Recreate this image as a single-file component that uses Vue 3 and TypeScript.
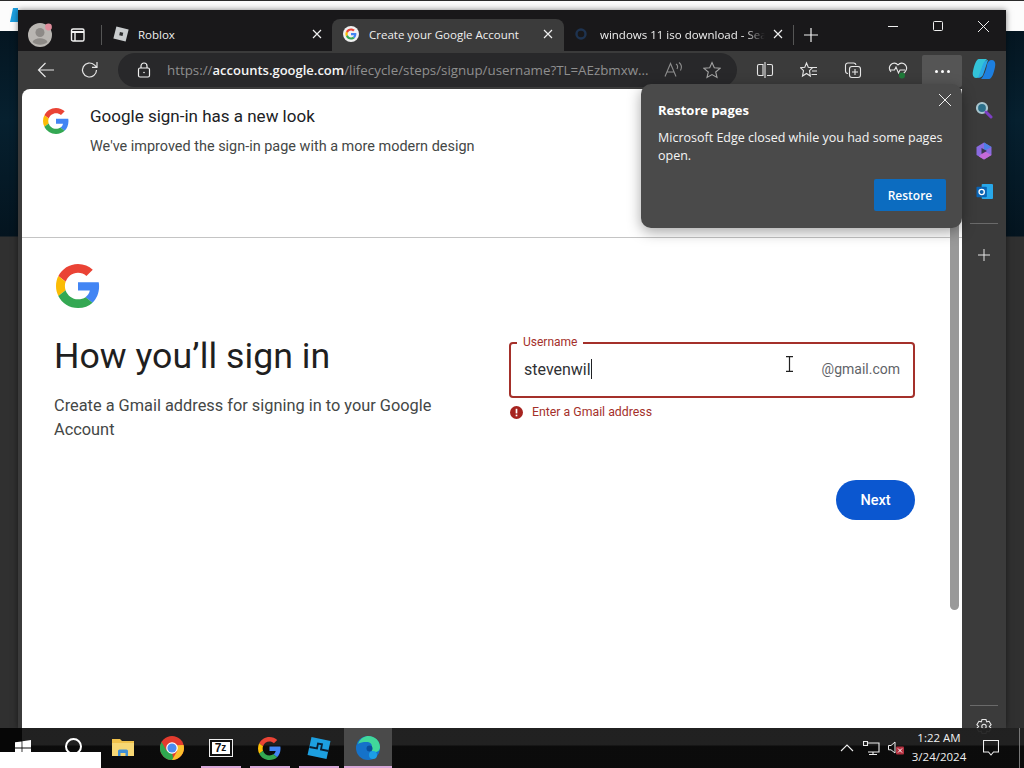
<script setup lang="ts">
const tabs = [
  { id: 'roblox', title: 'Roblox', active: false },
  { id: 'google', title: 'Create your Google Account', active: true },
  { id: 'search', title: 'windows 11 iso download - Sea', active: false },
]
const pinned = ['folder', 'chrome', 'sevenzip', 'google', 'roblox', 'edge']
</script>

<template>
  <div class="desktop">
    <div class="top-strip"></div>
    <svg class="desktop-icon" width="8" height="14" viewBox="0 0 8 14"><path d="M3 0h5v14H0z" fill="#1d9fe0" /></svg>
    <div class="window">
      <header class="tabbar">
        <div class="profile">
          <svg width="24" height="24" viewBox="0 0 24 24">
            <circle cx="12" cy="12" r="12" fill="#b9b6b2" />
            <circle cx="12" cy="9.500" r="4.500" fill="#8d8a87" />
            <path d="M4.500 19c2-5 13-5 15 0-4 3.500-11 3.500-15 0z" fill="#8d8a87" />
            <circle cx="20.500" cy="4" r="3.400" fill="#e08d9c" />
          </svg>
        </div>
        <svg class="tabs-icon" width="16" height="16" viewBox="0 0 16 16" fill="none" stroke="#f2f2f2" stroke-width="1.4">
          <rect x="1.500" y="2" width="12.500" height="12" rx="1.600" />
          <path d="M1.500 5h12.500" stroke-width="2" />
          <path d="M5 5v9" />
        </svg>
        <span class="divider"></span>
        <div
          v-for="tab in tabs"
          :key="tab.id"
          class="tab"
          :class="[`tab-${tab.id}`, { active: tab.active }]"
        >
          <svg v-if="tab.id === 'roblox'" class="favicon" width="16" height="16" viewBox="0 0 16 16">
            <path d="M3.400 0.600 15.600 3.400 12.600 15.400 0.400 12.400z" fill="#c9ccce" />
            <rect x="6.500" y="6.200" width="3.400" height="3.400" fill="#2a2b2c" transform="rotate(13 8 8)" />
          </svg>
          <svg v-else-if="tab.id === 'google'" class="favicon" width="16" height="16" viewBox="0 0 48 48">
            <circle cx="24" cy="24" r="24" fill="#f1f1f1" />
            <g transform="translate(7.200 7.200) scale(.7)">
              <path fill="#ea4335" d="M24 9.500c3.500 0 6.700 1.200 9.200 3.600l6.900-6.900C35.900 2.400 30.500 0 24 0 14.600 0 6.500 5.400 2.600 13.200l8 6.200C12.400 13.700 17.700 9.500 24 9.500z" />
              <path fill="#4285f4" d="M47 24.500c0-1.600-.1-3.100-.4-4.500H24v9h12.900c-.6 3-2.200 5.500-4.800 7.200l7.700 6C44.300 37.900 47 31.800 47 24.500z" />
              <path fill="#fbbc05" d="M10.500 28.600c-.5-1.400-.8-3-.8-4.600s.3-3.200.8-4.600l-8-6.200C.9 16.500 0 20.100 0 24s.9 7.500 2.600 10.800z" />
              <path fill="#34a853" d="M24 48c6.500 0 11.900-2.100 15.900-5.800l-7.700-6c-2.200 1.500-4.900 2.300-8.200 2.300-6.300 0-11.600-4.200-13.500-9.900l-8 6.200C6.500 42.600 14.600 48 24 48z" />
            </g>
          </svg>
          <svg v-else class="favicon" width="16" height="16" viewBox="0 0 16 16" fill="none" stroke="#1e3350" stroke-width="2.400">
            <circle cx="8" cy="8" r="4.500" />
          </svg>
          <span class="tab-title">{{ tab.title }}</span>
          <svg class="tab-close" width="10" height="10" viewBox="0 0 10 10" stroke="#efefef" stroke-width="1.200">
            <path d="M1 1l8 8M9 1l-8 8" />
          </svg>
        </div>
        <span class="divider new-divider"></span>
        <svg class="new-tab" width="14" height="14" viewBox="0 0 14 14" stroke="#f0f0f0" stroke-width="1.200">
          <path d="M7 0v14M0 7h14" />
        </svg>
        <div class="win-controls">
          <svg width="10" height="10" viewBox="0 0 10 10" stroke="#f0f0f0" stroke-width="1"><path d="M0 5.500h10" /></svg>
          <svg width="10" height="10" viewBox="0 0 10 10" fill="none" stroke="#f0f0f0" stroke-width="1"><rect x=".5" y=".5" width="9" height="9" rx="1" /></svg>
          <svg width="11" height="11" viewBox="0 0 11 11" stroke="#f0f0f0" stroke-width="1"><path d="M0 0l11 11M11 0 0 11" /></svg>
        </div>
      </header>

      <div class="toolbar">
        <svg class="nav-icon" width="18" height="18" viewBox="0 0 18 18" fill="none" stroke="#e6e6e6" stroke-width="1.200"><path d="M17 9H1.500M8.500 2 1.500 9l7 7" /></svg>
        <svg class="nav-icon reload" width="18" height="18" viewBox="0 0 18 18" fill="none" stroke="#e6e6e6" stroke-width="1.200"><path d="M15.500 9a7 7 0 1 1-2.200-5.100L16 6.400M16 1v5.400h-5" /></svg>
        <div class="address">
          <svg width="14" height="16" viewBox="0 0 14 16" fill="none" stroke="#efefef" stroke-width="1.200">
            <rect x="1.500" y="6" width="11" height="9" rx="1.500" />
            <path d="M4 6V4a3 3 0 0 1 6 0v2" />
            <circle cx="7" cy="10.500" r=".8" fill="#efefef" stroke="none" />
          </svg>
          <span class="url"><span class="dim">https://</span><b>accounts.google.com</b><span class="dim">/lifecycle/steps/signup/username?TL=AEzbmxw...</span></span>
          <svg class="addr-read" width="20" height="18" viewBox="0 0 20 18" fill="none" stroke="#8d8d8d" stroke-width="1.100">
            <path d="M1 15.500 6.500 2.500 12 15.500M3 11h7" />
            <path d="M12 3c1.500 1 2 3 1 5M15 1.500c2.500 2 3 5 1.500 8" />
          </svg>
          <svg class="addr-star" width="18" height="18" viewBox="0 0 18 18" fill="none" stroke="#a3a3a3" stroke-width="1.100">
            <path d="M9 1.500 11.300 6.700 17 7.300 12.700 11 14 16.500 9 13.600 4 16.500 5.300 11 1 7.300 6.700 6.700z" />
          </svg>
        </div>
        <div class="tools">
          <svg width="18" height="18" viewBox="0 0 18 18" fill="none" stroke="#e6e6e6" stroke-width="1.100">
            <path d="M7 3.500H3a1.500 1.500 0 0 0-1.500 1.500v8A1.500 1.500 0 0 0 3 14.500h4zM11 3.500h4A1.500 1.500 0 0 1 16.500 5v8a1.500 1.500 0 0 1-1.500 1.500h-4M9 1v16" />
          </svg>
          <svg width="18" height="18" viewBox="0 0 18 18" fill="none" stroke="#e6e6e6" stroke-width="1.100">
            <path d="M6.500 2 8.300 6.300 12.500 6.700 9.500 9.700 10.300 15 6.500 12.500 2.500 15 3.500 9.700.5 6.700 4.800 6.300zM12 6.500h5M12 10h5M11.500 13.500H17" />
          </svg>
          <svg width="18" height="18" viewBox="0 0 18 18" fill="none" stroke="#e6e6e6" stroke-width="1.100">
            <path d="M4 12.500A2.500 2.500 0 0 1 1.500 10V4.500A2.500 2.500 0 0 1 4 2h5.500A2.500 2.500 0 0 1 12 4" />
            <rect x="5.500" y="5.500" width="11" height="11" rx="2.500" />
            <path d="M11 8v6M8 11h6" />
          </svg>
          <svg width="20" height="18" viewBox="0 0 20 18" fill="none" stroke="#e6e6e6" stroke-width="1.100">
            <path d="M3 11C1 8.500 1 5.500 3 3.500s5-1.800 7 .5c2-2.300 5-2.500 7-.5s2 5 0 7.500l-3 3" />
            <path d="M1.500 9h5l1.500-3 2.500 6 1.500-3h5" />
            <circle cx="14" cy="14.500" r="3" fill="#1f7a3a" stroke="none" />
          </svg>
          <div class="more"><i></i><i></i><i></i></div>
        </div>
      </div>

      <div class="content">
        <main class="page">
          <section class="banner">
            <svg class="g-small" width="26" height="26" viewBox="0 0 48 48">
              <path fill="#ea4335" d="M24 9.500c3.500 0 6.700 1.200 9.200 3.600l6.900-6.900C35.900 2.400 30.500 0 24 0 14.600 0 6.500 5.400 2.600 13.200l8 6.200C12.400 13.700 17.700 9.500 24 9.500z" />
              <path fill="#4285f4" d="M47 24.500c0-1.600-.1-3.100-.4-4.500H24v9h12.900c-.6 3-2.200 5.500-4.800 7.200l7.700 6C44.300 37.900 47 31.800 47 24.500z" />
              <path fill="#fbbc05" d="M10.500 28.600c-.5-1.400-.8-3-.8-4.600s.3-3.200.8-4.600l-8-6.200C.9 16.500 0 20.100 0 24s.9 7.500 2.600 10.800z" />
              <path fill="#34a853" d="M24 48c6.500 0 11.900-2.100 15.900-5.800l-7.700-6c-2.200 1.500-4.900 2.300-8.200 2.300-6.300 0-11.600-4.200-13.500-9.900l-8 6.200C6.500 42.600 14.600 48 24 48z" />
            </svg>
            <div>
              <h2>Google sign-in has a new look</h2>
              <p>We've improved the sign-in page with a more modern design</p>
            </div>
          </section>

          <section class="signup">
            <svg class="g-large" width="44" height="44" viewBox="0 0 48 48">
              <path fill="#ea4335" d="M24 9.500c3.500 0 6.700 1.200 9.200 3.600l6.900-6.900C35.900 2.400 30.500 0 24 0 14.600 0 6.500 5.400 2.600 13.200l8 6.200C12.400 13.700 17.700 9.500 24 9.500z" />
              <path fill="#4285f4" d="M47 24.500c0-1.600-.1-3.100-.4-4.500H24v9h12.900c-.6 3-2.200 5.500-4.800 7.200l7.700 6C44.300 37.900 47 31.800 47 24.500z" />
              <path fill="#fbbc05" d="M10.500 28.600c-.5-1.400-.8-3-.8-4.600s.3-3.200.8-4.600l-8-6.200C.9 16.500 0 20.100 0 24s.9 7.500 2.600 10.800z" />
              <path fill="#34a853" d="M24 48c6.500 0 11.900-2.100 15.900-5.800l-7.700-6c-2.200 1.500-4.900 2.300-8.200 2.300-6.300 0-11.600-4.200-13.500-9.900l-8 6.200C6.500 42.600 14.600 48 24 48z" />
            </svg>
            <div class="columns">
              <div class="intro">
                <h1>How you’ll sign in</h1>
                <p>Create a Gmail address for signing in to your Google Account</p>
              </div>
              <div class="form">
                <div class="field">
                  <span class="field-label">Username</span>
                  <span class="field-value">stevenwil<i class="caret"></i></span>
                  <span class="field-suffix">@gmail.com</span>
                  <svg class="ibeam" width="9" height="16" viewBox="0 0 9 16" fill="none" stroke="#222" stroke-width="1.200">
                    <path d="M1 .6h7M1 15.400h7M4.500 .6v14.800" />
                  </svg>
                </div>
                <div class="error">
                  <svg width="13" height="13" viewBox="0 0 14 14">
                    <circle cx="7" cy="7" r="7" fill="#a6231f" />
                    <rect x="6.100" y="3" width="1.800" height="5" fill="#fff" />
                    <rect x="6.100" y="9.300" width="1.800" height="1.800" fill="#fff" />
                  </svg>
                  <span>Enter a Gmail address</span>
                </div>
                <button class="next" type="button">Next</button>
              </div>
            </div>
          </section>
          <div class="scrollbar"><span class="thumb"></span></div>
        </main>

        <aside class="sidebar">
          <svg class="copilot" width="26" height="26" viewBox="0 0 26 26">
            <path d="M8 3h8c-3 3-5 9-6 14-.5 3-2 5-5 5-2.500 0-4-3-3-7 1-5 3-12 6-12z" fill="#33c3d8" />
            <path d="M18 23h-8c3-3 5-9 6-14 .5-3 2-5 5-5 2.500 0 4 3 3 7-1 5-3 12-6 12z" fill="#1d7fe0" />
            <path d="M12 8c1-2 3-4 5-4l-5 15c-1 2-3 3-5 3z" fill="#2aa7e6" />
          </svg>
          <svg class="side-icon" width="18" height="18" viewBox="0 0 18 18" fill="none">
            <circle cx="7" cy="7" r="5" fill="#2b6f8a" stroke="#a9c6cf" stroke-width="2.200" />
            <path d="M11 11l5 5" stroke="#7d3fc4" stroke-width="3" stroke-linecap="round" />
          </svg>
          <svg class="side-icon" width="18" height="18" viewBox="0 0 18 18">
            <path d="M9 .5 16.500 5v8L9 17.500 1.500 13V5z" fill="#8a6be0" />
            <path d="M9 .5 16.500 5 9 9z" fill="#4c7fe6" />
            <path d="M9 9l7.500 4L9 17.500 4 14.500z" fill="#c46ad8" />
            <path d="M6.500 6 12 9 6.500 12z" fill="#3a3650" />
          </svg>
          <svg class="side-icon outlook" width="17" height="17" viewBox="0 0 18 18">
            <rect x="6" y="1" width="12" height="16" rx="1" fill="#28a8ea" />
            <rect x="0.500" y="4" width="11" height="11" rx="1" fill="#0a64b4" />
            <circle cx="6" cy="9.500" r="2.800" fill="none" stroke="#fff" stroke-width="1.400" />
          </svg>
          <span class="side-rule"></span>
          <svg class="side-plus" width="12" height="12" viewBox="0 0 12 12" stroke="#e6e6e6" stroke-width="1"><path d="M6 0v12M0 6h12" /></svg>
          <span class="side-spacer"></span>
          <span class="side-rule"></span>
          <svg class="side-gear" width="18" height="18" viewBox="0 0 18 18" fill="none" stroke="#e6e6e6" stroke-width="1.100">
            <path d="M7 1.500h4l.7 2.300 2.400-.5 2 3.400-1.700 1.800 1.700 1.800-2 3.400-2.400-.5-.7 2.300H7l-.7-2.300-2.400.5-2-3.400L3.600 8.500 1.900 6.700l2-3.400 2.400.5z" />
            <circle cx="9" cy="8.500" r="2.200" />
          </svg>
        </aside>
      </div>

      <div class="restore">
        <svg class="restore-close" width="12" height="12" viewBox="0 0 12 12" stroke="#f0f0f0" stroke-width="1"><path d="M0 0l12 12M12 0 0 12" /></svg>
        <h3>Restore pages</h3>
        <p>Microsoft Edge closed while you had some pages open.</p>
        <div class="restore-actions"><button type="button">Restore</button></div>
      </div>
    </div>

    <footer class="taskbar">
      <div class="start">
        <svg width="16" height="16" viewBox="0 0 16 16" fill="#fff">
          <path d="M0 2.300 6.600 1.400v6.200H0zM7.400 1.300 16 0v7.600H7.400zM0 8.400h6.600v6.200L0 13.700zM7.400 8.400H16V16l-8.600-1.300z" />
        </svg>
      </div>
      <div class="search-ring"><span></span></div>
      <div
        v-for="app in pinned"
        :key="app"
        class="task-app"
        :class="`app-${app}`"
      >
        <svg v-if="app === 'folder'" width="22" height="20" viewBox="0 0 22 20">
          <path d="M0 1h8l2 2h12v15H0z" fill="#f0c14b" />
          <path d="M0 5h22v13H0z" fill="#f7d774" />
          <path d="M6 18v-5a1.500 1.500 0 0 1 1.500-1.500h7A1.500 1.500 0 0 1 16 13v5h-2.500v-3h-5v3z" fill="#3f8fd6" />
        </svg>
        <svg v-else-if="app === 'chrome'" width="24" height="24" viewBox="0 0 24 24">
          <circle cx="12" cy="12" r="12" fill="#e33b2e" />
          <path d="M12 24A12 12 0 0 1 1.600 6l5.200 9 5 .3 1.700 8.600z" fill="#2fa84f" />
          <path d="M23.600 9A12 12 0 0 1 12 24l5.200-9-.6-5.700z" fill="#fbc02d" />
          <circle cx="12" cy="12" r="5.800" fill="#fff" />
          <circle cx="12" cy="12" r="4.600" fill="#4a8cf0" />
        </svg>
        <div v-else-if="app === 'sevenzip'" class="zip"><b>7</b><b class="z">z</b></div>
        <svg v-else-if="app === 'google'" width="23" height="23" viewBox="0 0 48 48">
          <path fill="#ea4335" d="M24 9.500c3.500 0 6.700 1.200 9.200 3.600l6.900-6.900C35.900 2.400 30.500 0 24 0 14.600 0 6.500 5.400 2.600 13.200l8 6.200C12.400 13.700 17.700 9.500 24 9.500z" />
          <path fill="#4285f4" d="M47 24.500c0-1.600-.1-3.100-.4-4.500H24v9h12.900c-.6 3-2.200 5.500-4.800 7.200l7.700 6C44.300 37.900 47 31.800 47 24.500z" />
          <path fill="#fbbc05" d="M10.500 28.600c-.5-1.400-.8-3-.8-4.600s.3-3.200.8-4.600l-8-6.200C.9 16.500 0 20.100 0 24s.9 7.500 2.600 10.800z" />
          <path fill="#34a853" d="M24 48c6.500 0 11.900-2.100 15.900-5.800l-7.700-6c-2.200 1.500-4.900 2.300-8.200 2.300-6.300 0-11.600-4.200-13.500-9.900l-8 6.200C6.500 42.600 14.600 48 24 48z" />
        </svg>
        <svg v-else-if="app === 'roblox'" width="24" height="24" viewBox="0 0 24 24">
          <path d="M4.500 1 23.500 5 19.500 23 .5 19z" fill="#1d9fe0" />
          <path d="M2.500 11 10 12.500 11 7.500 15 8.300 14 13.500 21.500 15" fill="none" stroke="#0b1f33" stroke-width="1.800" />
        </svg>
        <svg v-else width="24" height="24" viewBox="0 0 24 24">
          <circle cx="12" cy="12" r="12" fill="#1572c9" />
          <path d="M2 8C4 2 9 0 12.500 0 19 0 24 5 24 11c0 3-2 5-5 5-2.500 0-4-1-4-2.500 0-1 1-1.200 1-2.800C16 8 14 6 10.500 6 7 6 4 6.500 2 8z" fill="#41d89a" />
          <circle cx="13.500" cy="12.500" r="3" fill="#0a4f9c" />
          <circle cx="17" cy="19" r="4" fill="#1b9ee6" />
        </svg>
      </div>
      <div class="tray">
        <svg width="14" height="8" viewBox="0 0 14 8" fill="none" stroke="#eee" stroke-width="1.100"><path d="M1 7l6-6 6 6" /></svg>
        <svg width="17" height="14" viewBox="0 0 17 14" fill="none" stroke="#eee" stroke-width="1.100">
          <path d="M4 2h12v9H5M10 11v2.500M6 13.500h8M0.500 .5h4v4h-4z" />
        </svg>
        <svg class="speaker" width="18" height="14" viewBox="0 0 18 14">
          <path d="M.5 4.500h2.500L7 1v11L3 8.800H.5z" fill="none" stroke="#eee" stroke-width="1" />
          <rect x="8" y="5.500" width="8" height="8" rx="1" fill="#b3303f" />
          <path d="M10 7.500l4 4M14 7.500l-4 4" stroke="#fff" stroke-width="1" />
        </svg>
        <div class="clock"><span>1:22 AM</span><span>3/24/2024</span></div>
        <svg class="notify" width="16" height="16" viewBox="0 0 16 16" fill="none" stroke="#eee" stroke-width="1.100">
          <path d="M.5.500h15v11.500h-5L8 15 5.500 12h-5z" />
        </svg>
        <span class="show-desktop"></span>
      </div>
    </footer>
    <div class="corner-block"></div>
  </div>
</template>

<style scoped>
.desktop {
  position: relative;
  width: 1024px;
  height: 768px;
  overflow: hidden;
  background: linear-gradient(180deg, #04121c 0, #06202f 120px, #04141f 236px, #303030 237px, #303030 100%);
  font-family: "Roboto", "Liberation Sans", sans-serif;
}

.top-strip {
  height: 31px;
  background: #fcfcfc;
  border-top: 1px solid #2b2b2b;
  box-sizing: border-box;
}

.desktop-icon {
  position: absolute;
  left: 10px;
  top: 8px;
}

.window {
  position: absolute;
  left: 18px;
  top: 10px;
  width: 988px;
  height: 718px;
  display: flex;
  flex-direction: column;
  background: #3b3b3b;
  box-shadow: 0 0 6px rgba(0, 0, 0, 0.5);
}

.tabbar {
  height: 41px;
  flex: none;
  display: flex;
  align-items: flex-end;
  background: #19181a;
  position: relative;
}

.profile {
  width: 24px;
  height: 24px;
  margin: 0 0 4px 10px;
  flex: none;
}

.tabs-icon {
  margin: 0 0 8px 18px;
  flex: none;
}

.divider {
  width: 1px;
  height: 20px;
  background: #555;
  margin: 0 0 6px 15px;
  flex: none;
}

.tab {
  height: 32px;
  display: flex;
  align-items: center;
  color: #efefef;
  font-family: "Open Sans", "Liberation Sans", sans-serif;
  font-size: 11.500px;
  flex: none;
  box-sizing: border-box;
  padding-bottom: 2px;
}

.tab-roblox {
  width: 226px;
  padding-left: 7px;
  margin-left: 4px;
}

.tab-google {
  width: 232px;
  padding-left: 11px;
}

.tab-search {
  width: 226px;
  padding-left: 9px;
}

.tab.active {
  background: #3b3b3b;
  border-radius: 8px 8px 0 0;
}

.tab-title {
  flex: 1;
  min-width: 0;
  margin-left: 10px;
  white-space: nowrap;
}

.tab-roblox .tab-title {
  margin-left: 9px;
}

.tab-search .tab-title {
  margin-left: 11px;
  -webkit-mask-image: linear-gradient(90deg, #000 88%, transparent 100%);
  mask-image: linear-gradient(90deg, #000 88%, transparent 100%);
}

.tab-close {
  margin: 0 11px 0 8px;
  flex: none;
}

.tab-roblox .tab-close {
  margin-right: 10px;
}

.tab-search .tab-close {
  margin-right: 7px;
}

.favicon {
  flex: none;
}

.new-divider {
  margin-left: 3px;
}

.new-tab {
  margin: 0 0 9px 10px;
  flex: none;
}

.win-controls {
  position: absolute;
  right: 0;
  top: 0;
  width: 140px;
  height: 32px;
  display: flex;
  justify-content: space-between;
  align-items: center;
  padding: 0 17px 0 22px;
  box-sizing: border-box;
}

.toolbar {
  height: 38px;
  flex: none;
  display: flex;
  align-items: center;
  background: #3b3b3b;
}

.nav-icon {
  margin-left: 19px;
  flex: none;
}

.reload {
  margin-left: 26px;
}

.address {
  width: 619px;
  height: 34px;
  margin-left: 19px;
  padding: 0 12px 0 19px;
  box-sizing: border-box;
  border-radius: 17px;
  background: #28282a;
  display: flex;
  align-items: center;
  flex: none;
}

.url {
  margin-left: 16px;
  flex: 1;
  min-width: 0;
  white-space: nowrap;
  font-family: "Open Sans", "Liberation Sans", sans-serif;
  font-size: 13.350px;
  color: #f4f4f4;
}

.url b {
  font-size: 13px;
  font-weight: 600;
}

.url .dim {
  color: #8f8f8f;
}

.addr-read {
  margin-left: 8px;
  flex: none;
}

.addr-star {
  margin-left: 19px;
  margin-right: 4px;
  flex: none;
}

.tools {
  display: flex;
  align-items: center;
  gap: 26px;
  margin-left: 19px;
  height: 38px;
}

.more {
  width: 40px;
  height: 32px;
  margin-left: -12px;
  margin-top: 2px;
  background: #555;
  border-radius: 2px;
  display: flex;
  align-items: center;
  justify-content: center;
  gap: 3px;
}

.more i {
  width: 3px;
  height: 3px;
  border-radius: 50%;
  background: #fff;
}

.content {
  flex: 1;
  min-height: 0;
  display: flex;
}

.page {
  position: relative;
  width: 940px;
  margin-left: 4px;
  background: #fff;
  border-radius: 8px 0 0 0;
  color: #202124;
  overflow: hidden;
}

.banner {
  height: 149px;
  box-sizing: border-box;
  border-bottom: 1px solid #c4c4c4;
  padding: 19px 20px 19px 21px;
  display: flex;
  align-items: flex-start;
  gap: 21px;
}

.g-small {
  flex: none;
}

.banner h2 {
  margin: 0;
  font-size: 17px;
  font-weight: 400;
  line-height: 16px;
  color: #202124;
}

.banner p {
  margin: 15px 0 0;
  font-size: 14.450px;
  line-height: 16px;
  color: #444746;
}

.signup {
  padding: 26px 47px 0 32px;
}

.g-large {
  display: block;
  margin-left: 2px;
}

.columns {
  display: grid;
  grid-template-columns: 1fr 406px;
  column-gap: 55px;
  margin-top: 26px;
}

.intro h1 {
  margin: 0;
  font-size: 35.700px;
  font-weight: 400;
  line-height: 44px;
  color: #1f1f1f;
}

.intro p {
  margin: 16px 0 0;
  font-size: 16.350px;
  line-height: 24px;
  color: #444746;
}

.form {
  padding-top: 8px;
  display: flex;
  flex-direction: column;
}

.field {
  position: relative;
  height: 56px;
  box-sizing: border-box;
  border: 2px solid #a4302a;
  border-radius: 4px;
  display: flex;
  align-items: center;
  padding: 0 13px 2px;
}

.field-label {
  position: absolute;
  left: 6px;
  top: -9px;
  padding: 0 6px;
  background: #fff;
  font-size: 12px;
  line-height: 14px;
  color: #a4302a;
}

.field-value {
  flex: 1;
  font-size: 16px;
  color: #303134;
  display: flex;
  align-items: center;
}

.caret {
  width: 1px;
  height: 20px;
  background: #202124;
}

.field-suffix {
  font-size: 14px;
  color: #5f6368;
}

.ibeam {
  position: absolute;
  left: 274px;
  top: 12px;
}

.error {
  display: flex;
  align-items: center;
  gap: 9px;
  margin-top: 6px;
  padding-left: 1px;
  font-size: 12.300px;
  line-height: 16px;
  color: #a4302a;
}

.next {
  align-self: flex-end;
  margin-top: 60px;
  width: 79px;
  height: 40px;
  border: 0;
  border-radius: 20px;
  background: #0b57d0;
  color: #fff;
  font-family: inherit;
  font-size: 14.500px;
  font-weight: 500;
}

.scrollbar {
  position: absolute;
  right: 0;
  top: 0;
  bottom: 0;
  width: 14px;
}

.thumb {
  position: absolute;
  left: 2px;
  top: 60px;
  width: 9px;
  height: 461px;
  border-radius: 5px;
  background: #999;
}

.sidebar {
  flex: 1;
  display: flex;
  flex-direction: column;
  align-items: center;
  background: #3b3b3b;
  position: relative;
  min-height: 0;
}

.copilot {
  position: absolute;
  top: -33px;
  left: 9px;
}

.side-icon {
  margin-top: 12px;
  margin-bottom: 11px;
  flex: none;
}

.outlook {
  margin-bottom: 12px;
}

.side-rule {
  width: 28px;
  height: 1px;
  background: #6a6a6a;
  margin-top: 0;
  flex: none;
}

.side-plus {
  margin-top: 25px;
  flex: none;
}

.side-spacer {
  flex: 1;
}

.side-gear {
  margin-top: 12px;
  margin-bottom: -8px;
  flex: none;
}

.side-icon + .side-rule {
  margin-top: 11px;
}

.restore {
  position: absolute;
  left: 623px;
  top: 74px;
  width: 321px;
  height: 144px;
  box-sizing: border-box;
  padding: 17px 16px 16px 17px;
  border-radius: 10px;
  background: #4a4a4a;
  box-shadow: 0 4px 14px rgba(0, 0, 0, 0.35);
  color: #f5f5f5;
  font-family: "Open Sans", "Liberation Sans", sans-serif;
}

.restore-close {
  position: absolute;
  right: 11px;
  top: 10px;
}

.restore h3 {
  margin: 0;
  font-size: 13px;
  line-height: 18px;
  font-weight: 700;
  color: #fff;
}

.restore p {
  margin: 10px 0 0;
  font-size: 12.500px;
  line-height: 18px;
  width: 295px;
}

.restore-actions {
  display: flex;
  justify-content: flex-end;
  margin-top: 14px;
}

.restore button {
  width: 72px;
  height: 32px;
  border: 0;
  border-radius: 2px;
  background: #0c6cc0;
  color: #fff;
  font-family: inherit;
  font-size: 12px;
  font-weight: 600;
}

.taskbar {
  position: absolute;
  left: 0;
  right: 0;
  bottom: 0;
  height: 40px;
  display: flex;
  align-items: center;
  background:
    linear-gradient(90deg, #060606 0, #060606 22px, transparent 22px),
    linear-gradient(180deg, rgba(32, 32, 32, 0.94) 0, rgba(32, 32, 32, 0.94) 17px, rgba(10, 10, 10, 0.97) 18px, rgba(10, 10, 10, 0.97) 100%);
  color: #f0f0f0;
}

.start {
  width: 49px;
  padding-right: 3px;
  box-sizing: border-box;
  display: flex;
  justify-content: center;
  flex: none;
}

.search-ring {
  width: 49px;
  margin-bottom: 3px;
  display: flex;
  justify-content: center;
  flex: none;
}

.search-ring span {
  width: 13px;
  height: 13px;
  border: 2.500px solid #fff;
  border-radius: 50%;
}

.task-app {
  position: relative;
  width: 49px;
  height: 40px;
  flex: none;
  display: flex;
  align-items: center;
  justify-content: center;
}

.app-sevenzip::after,
.app-google::after,
.app-roblox::after {
  content: "";
  position: absolute;
  left: 5px;
  right: 4px;
  bottom: 0;
  height: 2px;
  background: #d7a6d7;
}

.app-edge {
  margin-left: 1px;
  width: 48px;
  background: #4a4a4a;
}

.app-edge::after {
  content: "";
  position: absolute;
  left: 0;
  right: 0;
  bottom: 0;
  height: 2px;
  background: #d7a6d7;
}

.zip {
  width: 22px;
  height: 16px;
  background: #fff;
  border: 2px solid #111;
  outline: 1px solid #eee;
  box-sizing: border-box;
  display: flex;
  align-items: center;
  justify-content: center;
  color: #111;
  font-family: "Liberation Sans", sans-serif;
  font-size: 12px;
  line-height: 12px;
}

.zip .z {
  font-size: 10px;
}

.tray {
  margin-left: auto;
  display: flex;
  align-items: center;
  height: 40px;
}

.speaker {
  margin-left: 8px;
}

.tray > svg:nth-child(2) {
  margin-left: 9px;
}

.clock {
  width: 70px;
  margin-left: -2px;
  margin-bottom: 2px;
  display: flex;
  flex-direction: column;
  align-items: center;
  font-family: "Open Sans", "Liberation Sans", sans-serif;
  font-size: 11.500px;
  line-height: 19px;
}

.notify {
  margin-left: 9px;
}

.show-desktop {
  width: 1px;
  height: 40px;
  background: #777;
  margin-left: 20px;
  margin-right: 4px;
}

.corner-block {
  position: absolute;
  left: 0;
  bottom: 0;
  width: 101px;
  height: 16px;
  background: #fff;
}
</style>

<style>
html,
body {
  margin: 0;
  background: #000;
}
</style>
